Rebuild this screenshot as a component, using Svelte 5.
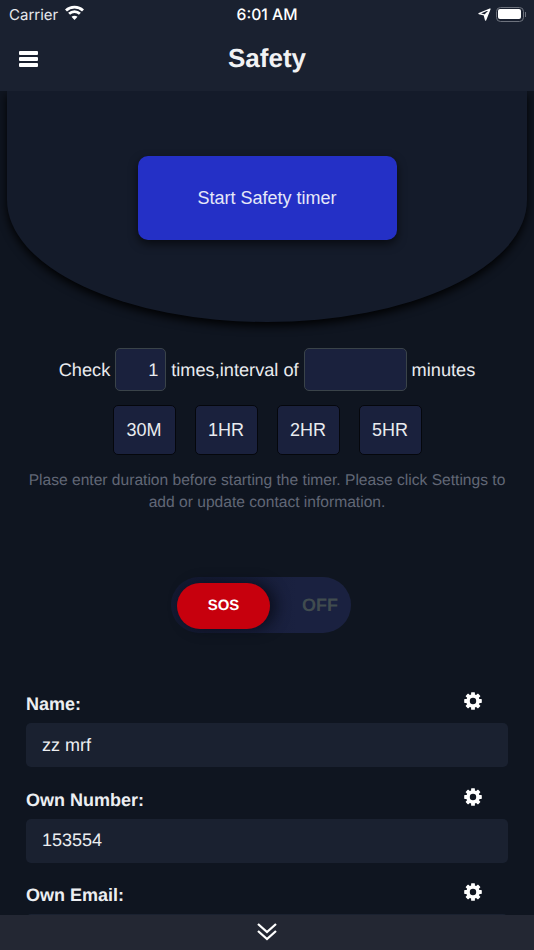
<script>
  const presets = ['30M', '1HR', '2HR', '5HR'];
  const fields = [
    { label: 'Name:', value: 'zz mrf' },
    { label: 'Own Number:', value: '153554' },
    { label: 'Own Email:', value: '' }
  ];
  const teeth = [0, 45, 90, 135, 180, 225, 270, 315];
</script>

<div class="page">
  <header class="header">
    <div class="status">
      <div class="status-left">
        <span class="carrier">Carrier</span>
        <svg class="wifi" width="19" height="15" viewBox="0 0 19 15" fill="none" stroke="#fff" stroke-width="2.8">
          <path d="M1 5.4C5.6 .9 13.4 .9 18 5.4" />
          <path d="M4.1 8.8c3-2.9 7.8-2.9 10.8 0" />
          <path d="M9.5 15l-3-3.2c1.7-1.4 4.3-1.4 6 0z" fill="#fff" stroke="none" />
        </svg>
      </div>
      <span class="time">6:01 AM</span>
      <div class="status-right">
        <svg width="13" height="13" viewBox="0 0 13 13" fill="none" stroke="#fff" stroke-width="1.3" stroke-linejoin="round">
          <path d="M12 1L1 5.6l5.2 1.2L7.6 12z" />
          <path d="M12 1L6.2 6.8l1.4 5.2z" fill="#fff" stroke="none" />
        </svg>
        <div class="battery"><div class="battery-fill"></div></div>
        <div class="battery-cap"></div>
      </div>
    </div>
    <div class="nav">
      <div class="burger"><span></span><span></span><span></span></div>
      <h1>Safety</h1>
    </div>
  </header>

  <section class="dome">
    <button class="start">Start Safety timer</button>
  </section>

  <div class="check-row">
    <span>Check</span>
    <div class="box small">1</div>
    <span>times,interval of</span>
    <div class="box wide"></div>
    <span>minutes</span>
  </div>

  <div class="presets">
    {#each presets as p}
      <button class="preset">{p}</button>
    {/each}
  </div>

  <p class="hint">Plase enter duration before starting the timer. Please click Settings to add or update contact information.</p>

  <div class="toggle">
    <div class="knob">SOS</div>
    <span class="off">OFF</span>
  </div>

  <div class="fields">
    {#each fields as f}
      <div class="field">
        <div class="field-head">
          <label for={f.label}>{f.label}</label>
          <svg class="gear" width="18" height="18" viewBox="0 0 18 18">
            {#each teeth as t}
              <rect x="7.1" y="0.2" width="3.8" height="4" rx="0.6" fill="#fff" transform="rotate({t} 9 9)" />
            {/each}
            <circle cx="9" cy="9" r="5" fill="none" stroke="#fff" stroke-width="3.6" />
          </svg>
        </div>
        <div class="input" id={f.label}>{f.value}</div>
      </div>
    {/each}
  </div>

  <footer class="footer">
    <svg width="20" height="19" viewBox="0 0 20 19" fill="none" stroke="#fff" stroke-width="2.3">
      <path d="M1 2l9 8 9-8" />
      <path d="M1 9l9 8 9-8" />
    </svg>
  </footer>
</div>

<style>
  :global(body) {
    margin: 0;
    background: #0f1520;
  }
  .page {
    width: 534px;
    height: 950px;
    overflow: hidden;
    position: relative;
    background: #0f1520;
    font-family: "Liberation Sans", Arial, sans-serif;
    color: #e9ebef;
    text-rendering: geometricPrecision;
  }
  .header {
    height: 91px;
    background: #1a2130;
    position: relative;
    z-index: 1;
  }
  .status {
    height: 28px;
    display: flex;
    align-items: center;
    justify-content: space-between;
    padding: 0 8px 0 9px;
    font-family: Inter, "Liberation Sans", sans-serif;
    font-size: 15px;
    color: #fff;
    position: relative;
  }
  .status-left {
    display: flex;
    align-items: center;
    gap: 7px;
  }
  .carrier {
    color: #e6e8ec;
  }
  .wifi {
    margin-top: -3px;
  }
  .time {
    position: absolute;
    left: 0;
    right: 0;
    text-align: center;
    font-weight: 500;
    font-size: 15.7px;
    pointer-events: none;
  }
  .status-right {
    display: flex;
    align-items: center;
  }
  .status-right svg {
    margin-right: 5px;
  }
  .battery {
    width: 28px;
    height: 15px;
    box-sizing: border-box;
    border: 1.5px solid #6d727d;
    border-radius: 4.5px;
    padding: 1.5px;
  }
  .battery-fill {
    height: 100%;
    background: #fff;
    border-radius: 2px;
  }
  .battery-cap {
    width: 1.5px;
    height: 5px;
    background: #6d727d;
    margin-left: 1px;
  }
  .nav {
    height: 60px;
    position: relative;
    display: flex;
    align-items: center;
    justify-content: center;
  }
  .burger {
    position: absolute;
    left: 19px;
    top: 23px;
    width: 19px;
    display: flex;
    flex-direction: column;
    gap: 2.5px;
  }
  .burger span {
    height: 3.5px;
    background: #fff;
    border-radius: 1px;
  }
  h1 {
    margin: 1px 0 0;
    font-size: 26px;
    font-weight: 700;
    color: #f1f2f4;
  }
  .dome {
    height: 231px;
    margin: 0 7px;
    box-sizing: border-box;
    padding-top: 65px;
    background: #141b2a;
    border-radius: 0 0 260px 260px / 0 0 122px 122px;
    box-shadow: 0 4px 10px rgba(0, 0, 0, 0.95);
    display: flex;
    justify-content: center;
    align-items: flex-start;
  }
  .start {
    width: 259px;
    height: 84px;
    border: none;
    border-radius: 10px;
    background: #2430c6;
    color: #e6e8f8;
    font: 18px "Liberation Sans", Arial, sans-serif;
    box-shadow: 0 4px 10px rgba(0, 0, 0, 0.6);
    padding: 0;
  }
  .check-row {
    margin-top: 26px;
    height: 43px;
    display: flex;
    justify-content: center;
    align-items: center;
    gap: 5px;
    font-size: 18.2px;
  }
  .check-row span {
    padding-top: 1px;
  }
  .box {
    height: 43px;
    box-sizing: border-box;
    background: #1a213d;
    border: 1.5px solid #3a4349;
    border-radius: 5px;
    display: flex;
    align-items: center;
    justify-content: flex-end;
    padding: 1px 7px 0 0;
  }
  .small {
    width: 51px;
  }
  .wide {
    width: 103px;
  }
  .presets {
    margin-top: 14px;
    display: flex;
    justify-content: center;
    gap: 19px;
  }
  .preset {
    width: 63px;
    height: 50px;
    box-sizing: border-box;
    background: #1a213d;
    border: 1.5px solid #05070c;
    border-radius: 5px;
    color: #e9ebef;
    font: 18px "Liberation Sans", Arial, sans-serif;
    padding: 0;
  }
  .hint {
    margin: 15px 0 0;
    padding: 0 20px;
    text-align: center;
    font-size: 15.6px;
    line-height: 22px;
    color: #616776;
  }
  .toggle {
    margin: 63px 0 0 171px;
    width: 180px;
    height: 56px;
    box-sizing: border-box;
    border-radius: 28px;
    background: linear-gradient(90deg, #131930 0%, #1a2140 70%);
    display: flex;
    align-items: center;
    padding: 1px 0 0 6px;
  }
  .knob {
    width: 93px;
    height: 46px;
    border-radius: 23px;
    background: #c7000d;
    color: #fff;
    font-weight: 700;
    font-size: 15px;
    display: flex;
    align-items: center;
    justify-content: center;
    box-shadow: 6px 0 14px rgba(5, 8, 18, 0.7);
  }
  .off {
    margin-left: 32px;
    font-weight: 700;
    font-size: 18px;
    color: #414c4f;
  }
  .fields {
    margin-top: 53px;
    padding: 0 26px;
    display: flex;
    flex-direction: column;
    gap: 14.5px;
  }
  .field-head {
    height: 37px;
    position: relative;
    display: flex;
    align-items: center;
  }
  label {
    font-size: 18px;
    font-weight: 700;
    color: #eceef1;
  }
  .gear {
    position: absolute;
    left: 438px;
    top: 6px;
  }
  .input {
    height: 44px;
    background: #1a2130;
    border-radius: 5px;
    display: flex;
    align-items: center;
    padding-left: 16px;
    font-size: 18px;
    color: #eceef1;
  }
  .footer {
    position: absolute;
    left: 0;
    right: 0;
    bottom: 0;
    height: 35px;
    background: #232733;
    display: flex;
    align-items: center;
    justify-content: center;
    padding-bottom: 3px;
    box-sizing: border-box;
  }
</style>
